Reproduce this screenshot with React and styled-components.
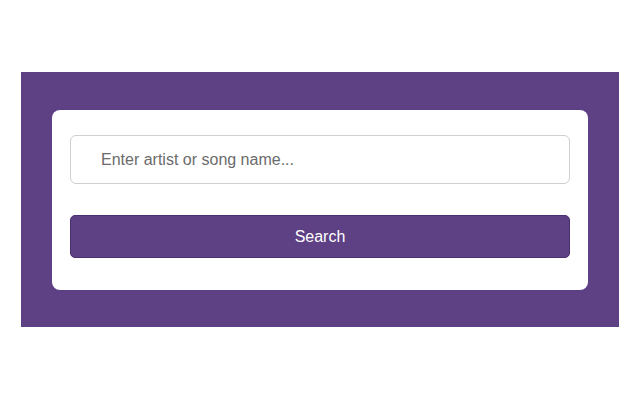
import styled, { createGlobalStyle } from "styled-components";

const GlobalStyle = createGlobalStyle`
    body {
        margin: 0;
        background: #ffffff;
        font-family: "Liberation Sans", Arial, sans-serif;
    }
`

function App() {
    return (
        <>
            <GlobalStyle />
            <Page>
                <Banner>
                    <SearchCard onSubmit={(e) => e.preventDefault()}>
                        <SearchInput
                            type="text"
                            placeholder="Enter artist or song name..." />
                        <SearchButton type="submit">
                            Search
                        </SearchButton>
                    </SearchCard>
                </Banner>
            </Page>
        </>
    )
}

export default App;


const Page = styled.div`
    width: 640px;
    height: 400px;
    box-sizing: border-box;
    padding: 72px 21px;
`

const Banner = styled.section`
    background-color: #5e4084;
    height: 255px;
    box-sizing: border-box;
    padding: 38px 31px 37px 31px;
`

const SearchCard = styled.form`
    background-color: #ffffff;
    border-radius: 8px;
    padding: 25px 18px 32px 18px;
    display: flex;
    flex-direction: column;
    margin: 0;
`

const SearchInput = styled.input`
    height: 49px;
    box-sizing: border-box;
    border: 1px solid #cfcfcf;
    border-radius: 6px;
    padding: 0 30px;
    font-family: "Liberation Sans", Arial, sans-serif;
    font-size: 16px;
    color: #333;
    outline: none;
    margin-bottom: 31px;
    &::placeholder {
        color: #6b6b6b;
    }
`

const SearchButton = styled.button`
    height: 43px;
    box-sizing: border-box;
    background-color: #5e4084;
    border: 1px solid #4b3070;
    border-radius: 5px;
    color: #ffffff;
    font-family: "Liberation Sans", Arial, sans-serif;
    font-size: 16px;
    cursor: pointer;
`
